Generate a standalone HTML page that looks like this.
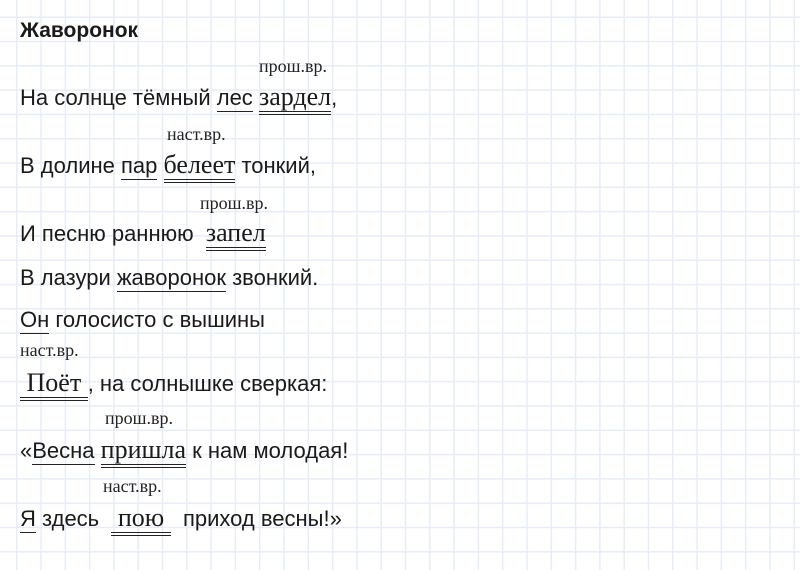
<!DOCTYPE html>
<html><head><meta charset="utf-8"><style>
html,body{margin:0;padding:0}
body{width:800px;height:570px;overflow:hidden;position:relative;background-color:#fff;
background-image:linear-gradient(to right,#e6edf8 1.5px,transparent 1.5px),linear-gradient(to bottom,#e6edf8 1.5px,transparent 1.5px);
background-size:24.3px 24.3px;background-position:16px 16.5px;
font-family:"Liberation Sans",sans-serif;color:#1a1a1a}
.l{position:absolute;left:20px;font-size:22px;white-space:pre;line-height:26px}
.a{position:absolute;font-family:"Liberation Serif",serif;font-size:18px;color:#222;white-space:pre}
.u{border-bottom:1.5px solid #222;padding-bottom:1px}
.d{font-family:"Liberation Serif",serif;font-size:26px;border-bottom:4px double #222;padding-bottom:0px}
h1{position:absolute;left:20px;top:19px;margin:0;font-size:21px;font-weight:bold}
</style></head><body>
<h1>Жаворонок</h1>
<div class="a" style="left:259px;top:56px">прош.вр.</div>
<div class="l" style="top:84px">На солнце тёмный <span class="u">лес</span> <span class="d">зардел</span>,</div>
<div class="a" style="left:167px;top:124px">наст.вр.</div>
<div class="l" style="top:152px">В долине <span class="u">пар</span> <span class="d">белеет</span> тонкий,</div>
<div class="a" style="left:200px;top:193px">прош.вр.</div>
<div class="l" style="top:220px">И песню раннюю  <span class="d">запел</span></div>
<div class="l" style="top:265px">В лазури <span class="u">жаворонок</span> звонкий.</div>
<div class="l" style="top:307px"><span class="u">Он</span> голосисто с вышины</div>
<div class="a" style="left:20px;top:340px">наст.вр.</div>
<div class="l" style="top:370px"><span class="d"> Поёт </span>, на солнышке сверкая:</div>
<div class="a" style="left:105px;top:408px">прош.вр.</div>
<div class="l" style="top:437px">«<span class="u">Весна</span> <span class="d">пришла</span> к нам молодая!</div>
<div class="a" style="left:103px;top:476px">наст.вр.</div>
<div class="l" style="top:505px"><span class="u">Я</span> здесь  <span class="d"> пою </span>  приход весны!»</div>
</body></html>
